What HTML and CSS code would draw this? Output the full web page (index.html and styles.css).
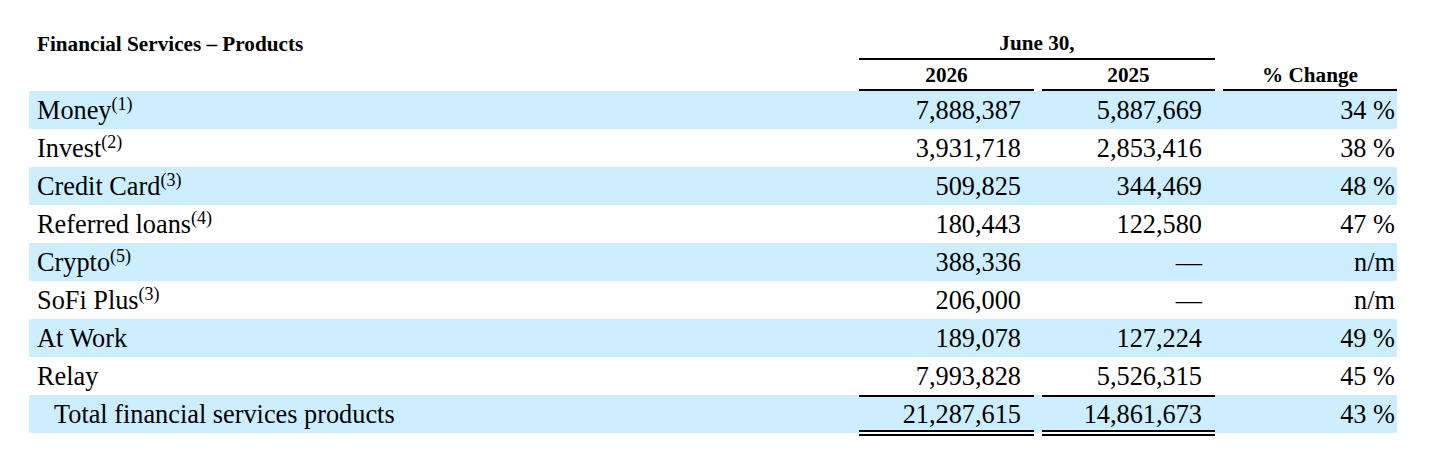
FILE: index.html
```html
<!DOCTYPE html>
<html lang="en">
<head>
<meta charset="utf-8">
<title>Financial Services – Products</title>
<link rel="stylesheet" href="styles.css">
</head>
<body>
<div class="table">
  <div class="row head1">
    <div class="hlabel">Financial Services – Products</div>
    <div class="hspan">June 30,</div>
  </div>
  <div class="row head2">
    <div></div>
    <div class="hcell">2026</div>
    <div class="hcell">2025</div>
    <div class="hcell">% Change</div>
  </div>
  <div class="row data band">
    <div class="label">Money<sup>(1)</sup></div>
    <div class="num">7,888,387</div>
    <div class="num">5,887,669</div>
    <div class="pct">34 %</div>
  </div>
  <div class="row data">
    <div class="label">Invest<sup>(2)</sup></div>
    <div class="num">3,931,718</div>
    <div class="num">2,853,416</div>
    <div class="pct">38 %</div>
  </div>
  <div class="row data band">
    <div class="label">Credit Card<sup>(3)</sup></div>
    <div class="num">509,825</div>
    <div class="num">344,469</div>
    <div class="pct">48 %</div>
  </div>
  <div class="row data">
    <div class="label">Referred loans<sup>(4)</sup></div>
    <div class="num">180,443</div>
    <div class="num">122,580</div>
    <div class="pct">47 %</div>
  </div>
  <div class="row data band">
    <div class="label">Crypto<sup>(5)</sup></div>
    <div class="num">388,336</div>
    <div class="num">—</div>
    <div class="pct">n/m</div>
  </div>
  <div class="row data">
    <div class="label">SoFi Plus<sup>(3)</sup></div>
    <div class="num">206,000</div>
    <div class="num">—</div>
    <div class="pct">n/m</div>
  </div>
  <div class="row data band">
    <div class="label">At Work</div>
    <div class="num">189,078</div>
    <div class="num">127,224</div>
    <div class="pct">49 %</div>
  </div>
  <div class="row data">
    <div class="label">Relay</div>
    <div class="num">7,993,828</div>
    <div class="num">5,526,315</div>
    <div class="pct">45 %</div>
  </div>
  <div class="row data total">
    <div class="label indent">Total financial services products</div>
    <div class="num tnum">21,287,615</div>
    <div class="num tnum">14,861,673</div>
    <div class="pct">43 %</div>
  </div>
</div>
</body>
</html>
```

FILE: styles.css
```css
html, body {
  margin: 0;
  padding: 0;
  background: #ffffff;
}

body {
  font-family: "Liberation Serif", "Times New Roman", serif;
  color: #000000;
  min-height: 462px;
}

.table {
  margin-left: 29px;
  width: 1368px;
  padding-bottom: 26px;
}

.row {
  display: grid;
  grid-template-columns: 822px 175px 173px 174px;
  column-gap: 8px;
}

.head1 {
  height: 60px;
  align-items: end;
  font-weight: bold;
  font-size: 21.2px;
}

.hlabel {
  padding-left: 8px;
  line-height: 24px;
  padding-bottom: 4px;
}

.hspan {
  grid-column: 2 / 4;
  text-align: center;
  line-height: 24px;
  padding-bottom: 3px;
  border-bottom: 2px solid #000;
}

.head2 {
  height: 31px;
  font-weight: bold;
  font-size: 21.2px;
}

.hcell {
  text-align: center;
  line-height: 27px;
  padding-top: 2px;
  border-bottom: 2px solid #000;
}

.data {
  height: 38px;
  font-size: 26.3px;
  line-height: 36px;
}

.data > div {
  padding-top: 2px;
}

.band {
  background: #cceeff;
}

.label {
  padding-left: 8px;
  white-space: nowrap;
}

.label.indent {
  padding-left: 25px;
}

.label sup {
  font-size: 18px;
  line-height: 0;
  vertical-align: 9px;
}

.num {
  text-align: right;
  padding-right: 13px;
}

.pct {
  text-align: right;
  padding-right: 2px;
}

.data.total {
  height: 41px;
  background: linear-gradient(#cceeff, #cceeff) top left / 100% 38px no-repeat;
}

.data > .tnum {
  line-height: 31px;
  padding-top: 2px;
  border-top: 2px solid #000;
  border-bottom: 6px double #000;
  background: linear-gradient(#cceeff, #cceeff) padding-box, #ffffff border-box;
}
```
